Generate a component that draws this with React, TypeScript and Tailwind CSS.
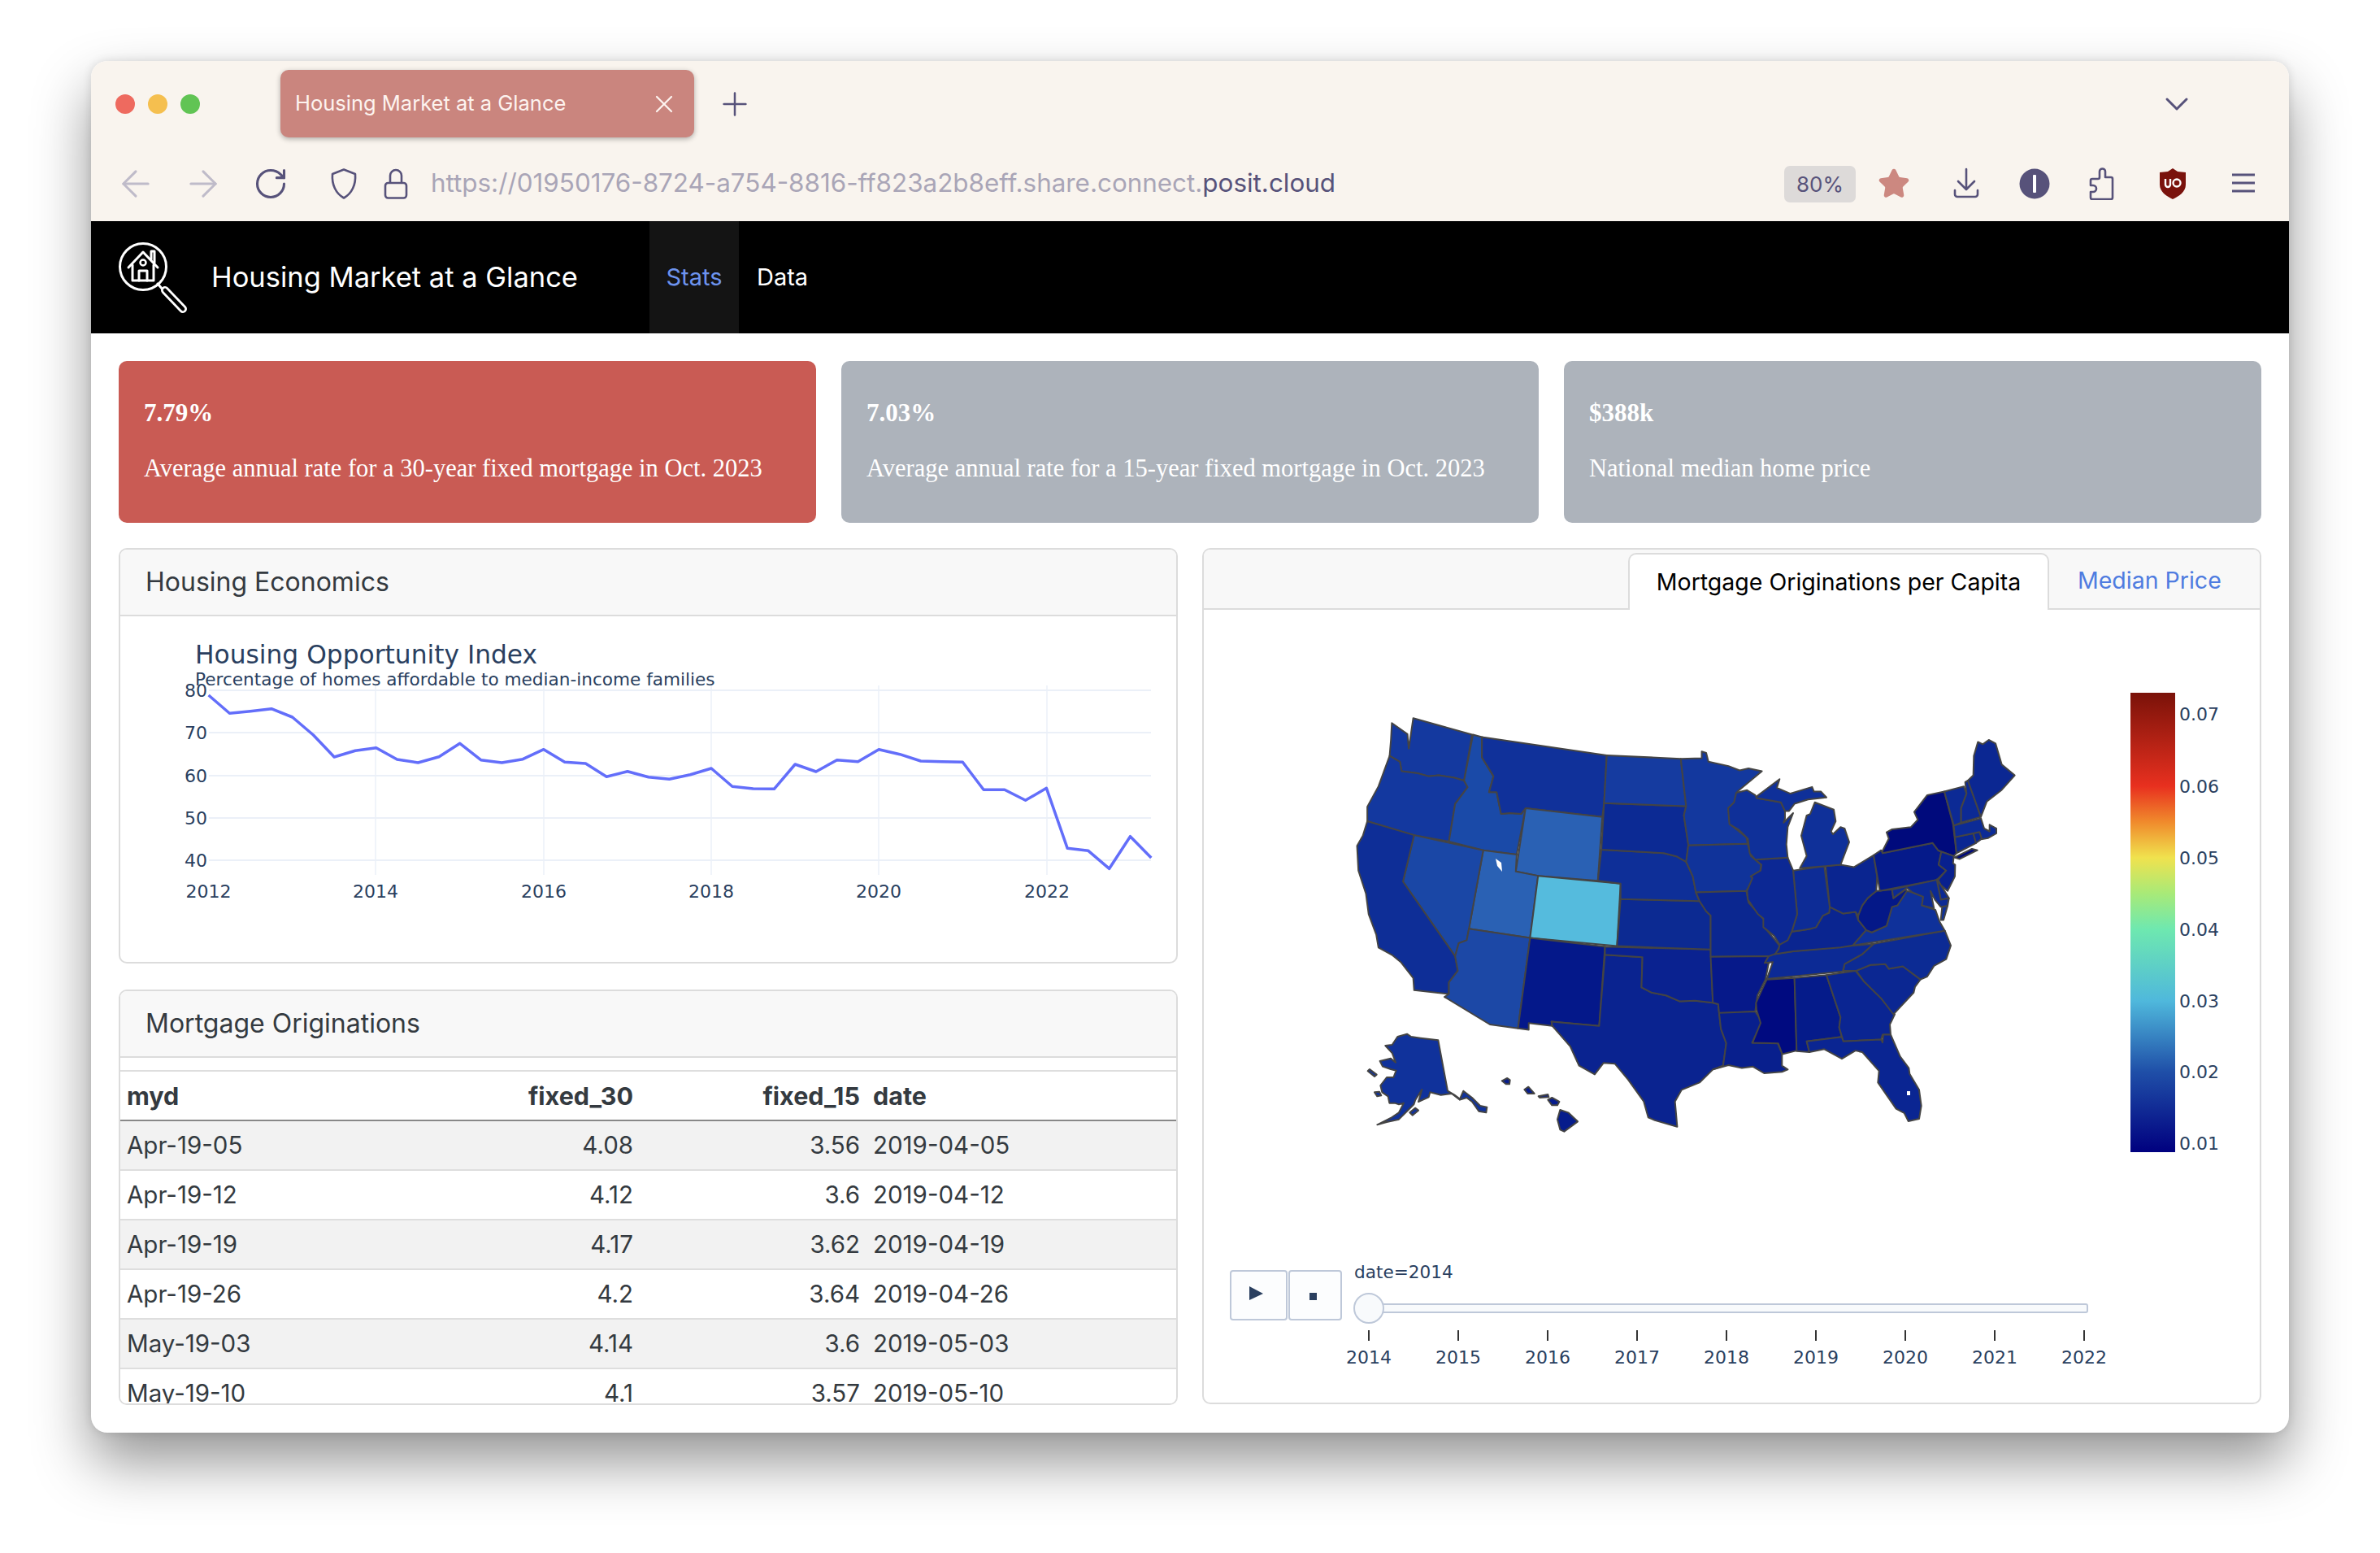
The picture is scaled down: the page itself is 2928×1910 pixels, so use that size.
import React from 'react';
import { ArrowLeft, ArrowRight, RotateCw, Plus, X, ChevronDown, Star } from 'lucide-react';

// quarterly values, as y positions read off the chart
const lineY = [285, 352, 344, 335, 366, 432, 513, 490, 479, 522, 534, 512, 463, 524, 534, 521, 485, 532, 537, 586, 566, 587, 595, 578, 555, 622, 630, 631, 540, 567, 524, 530, 485, 503, 528, 530, 532, 634, 634, 673, 628, 850, 859, 925, 806, 885];
const linePoints = lineY.map((y, i) => `${(256.6 + i * 25.77).toFixed(1)},${(760 + y / 3).toFixed(1)}`).join(' ');

const rows = [
  ['Apr-19-05', '4.08', '3.56', '2019-04-05'],
  ['Apr-19-12', '4.12', '3.6', '2019-04-12'],
  ['Apr-19-19', '4.17', '3.62', '2019-04-19'],
  ['Apr-19-26', '4.2', '3.64', '2019-04-26'],
  ['May-19-03', '4.14', '3.6', '2019-05-03'],
  ['May-19-10', '4.1', '3.57', '2019-05-10'],
];

const westStates: [string, string][] = [
  ['#14399f', '130,82 165,120 168,170 178,65 310,122 292,280 270,270 235,262 212,265 188,255 152,248 148,215 125,195 128,140'],
  ['#13389f', '125,195 148,215 152,248 188,255 212,265 235,262 270,270 292,280 300,303 272,360 258,490 180,468 75,420 75,370 100,300'],
  ['#1a4aa8', '312,122 332,130 332,200 358,265 348,320 365,320 375,395 395,392 420,395 430,375 410,535 335,520 258,490 272,360 300,303 292,280'],
  ['#10319a', '332,130 612,193 606,358 602,405 430,375 420,395 395,392 375,395 365,320 348,320 358,265 332,200'],
  ['#2a61b4', '430,375 602,405 592,625 458,608 408,593'],
  ['#2a61b4', '335,520 410,535 408,593 458,608 440,822 303,790'],
  ['#55bbdd', '458,608 643,635 635,850 440,822'],
  ['#1a47a6', '180,468 335,520 303,790 298,830 280,840 272,885 155,628'],
  ['#0e2e97', '75,420 180,468 155,628 272,885 278,935 258,975 258,1015 180,1002 178,960 150,905 130,880 100,855 95,810 78,740 72,670 55,590 52,505 65,470'],
  ['#1c48a6', '303,790 440,822 413,1133 350,1120 248,1025 258,1015 258,975 278,935 272,885 280,840 298,830'],
  ['#04188a', '440,822 608,852 595,1125 488,1110 490,1125 437,1115 437,1138 413,1133'],
  ['#0a2390', '608,880 692,888 690,992 712,1010 745,1020 775,1040 810,1038 850,1045 862,1050 864,1080 868,1135 880,1185 873,1262 850,1275 820,1320 780,1345 765,1385 770,1472 720,1450 705,1440 695,1385 660,1310 630,1255 605,1252 585,1292 550,1262 530,1195 490,1125 488,1110 595,1125'],
  ['#0a2290', '608,852 845,862 850,1045 810,1038 775,1040 745,1020 712,1010 690,992 692,888 608,880'],
  ['#0c2a92', '643,688 820,695 835,730 845,745 845,862 635,850'],
  ['#0e2f98', '600,518 740,530 770,542 790,560 805,610 812,665 820,695 643,688 643,635 592,625'],
  ['#0c2a94', '606,358 790,368 785,400 795,500 790,560 770,542 740,530 600,518'],
  ['#153ba0', '612,193 778,205 790,368 606,358'],
  ['#13389e', '778,205 825,203 825,180 835,185 840,215 885,230 910,245 930,238 960,248 905,318 900,360 885,380 888,430 925,475 928,498 795,503 785,400 790,368'],
  ['#10339a', '795,503 928,498 935,540 958,570 955,605 938,625 925,660 812,665 805,610 790,560'],
  ['#0b2790', '812,665 925,660 930,700 965,760 968,790 990,830 1000,850 990,880 975,910 968,905 975,885 845,887 845,745 835,730 820,695'],
  ['#06198a', '845,887 975,885 968,905 975,910 968,965 950,1020 945,1075 864,1082 862,1050 850,1045'],
  ['#081f8d', '864,1080 945,1075 960,1110 938,1183 995,1183 1005,1220 1005,1262 1018,1275 1005,1283 965,1288 940,1265 915,1270 885,1260 850,1275 873,1262 880,1185 868,1135'],
];

const eastStates: [string, string][] = [
  ['#000a80', '218,965 320,960 328,1210 275,1222 260,1185 165,1183 195,1115 180,1070 178,1045 205,990'],
  ['#051b8a', '320,960 438,950 490,1095 485,1130 495,1163 365,1178 375,1215 328,1212'],
  ['#0a2592', '438,950 545,935 575,970 640,1030 690,1085 672,1120 675,1155 645,1155 640,1172 500,1178 485,1130 490,1095'],
  ['#0a2592', '365,1178 495,1163 500,1178 640,1172 645,1182 648,1155 675,1155 710,1230 742,1270 745,1290 780,1345 788,1400 780,1445 740,1453 725,1425 695,1410 628,1320 632,1280 570,1215 545,1210 495,1238 430,1205 375,1215'],
  ['#0b2792', '548,935 600,915 655,912 668,928 720,920 785,965 765,990 760,1010 710,1060 685,1085 640,1030 575,970'],
  ['#0c2b94', '500,935 505,912 570,878 612,842 875,797 897,848 880,895 835,918 810,955 785,965 720,920 668,928 655,912 600,915 548,935'],
  ['#0c2a95', '245,878 315,868 612,842 570,878 505,912 498,937 218,963 240,905 210,908 225,885'],
  ['#0a2590', '265,845 310,800 350,795 380,790 400,785 425,745 448,735 450,715 500,738 545,732 555,760 585,795 535,848 490,855 315,868 248,878 262,860'],
  ['#0f319a', '535,848 585,795 605,803 660,780 680,715 700,710 735,660 755,665 795,680 790,710 840,725 855,765 875,797'],
  ['#041888', '555,745 570,710 590,685 615,665 625,660 680,655 685,685 730,655 735,660 700,710 680,715 660,780 605,803 585,795 555,760'],
  ['#0a2590', '435,575 490,570 540,578 612,537 625,610 622,660 590,685 570,710 555,745 545,732 500,738 450,715'],
  ['#0d2c96', '315,590 430,575 450,715 448,735 425,745 400,785 380,790 350,795 310,800 330,740'],
  ['#0c2894', '175,552 295,545 315,590 330,740 310,800 295,830 265,845 245,815 205,785 205,755 185,740 148,690 145,660 165,615 158,610 195,590 198,570'],
  ['#0f3099', '105,322 145,313 175,330 180,340 270,355 285,385 285,410 280,425 315,392 295,440 290,500 295,545 175,552 155,530 148,480 115,450 80,430 75,375 97,355'],
  ['#0f3099', '345,470 365,400 378,395 395,355 465,380 472,420 455,455 462,465 490,440 505,445 522,492 490,570 435,575 340,582 365,540'],
  ['#0f3099', '180,335 265,275 255,305 305,325 385,302 392,318 418,318 438,338 370,345 320,360 300,385 285,385 270,355 180,340'],
  ['#051a8a', '612,537 640,520 645,530 830,495 850,520 862,525 852,570 880,590 845,622 635,660'],
  ['#000a7c', '645,522 668,480 660,458 680,448 750,440 775,415 762,388 810,330 873,318 905,430 918,530 908,540 862,525 850,520 830,495 645,530'],
  ['#000a7c', '910,545 975,515 995,520 930,550'],
  ['#08208e', '862,525 908,540 905,565 913,570 912,610 885,660 860,640 850,622 880,590 852,570'],
  ['#0c2a94', '845,620 860,640 890,685 860,690'],
  ['#0c2a94', '680,655 845,622 860,690 890,685 885,712 860,715 838,690 822,660 835,720 790,710 795,680 755,665 735,650 685,685'],
  ['#0f319a', '865,715 885,712 870,760 860,760'],
  ['#0a2792', '912,475 980,462 990,495 918,530'],
  ['#0a2792', '980,462 1003,457 1012,480 990,495'],
  ['#0c2b96', '908,435 1008,410 1020,445 1040,455 1040,432 1065,445 1065,462 1035,478 1012,482 1003,457 912,475'],
  ['#0c2a95', '873,318 945,300 955,325 935,375 935,425 908,435'],
  ['#0c2a95', '950,285 960,280 1008,405 935,425 935,375 955,325'],
  ['#0b2792', '960,280 980,262 982,195 997,147 1015,155 1037,140 1062,152 1085,225 1133,262 1085,312 1030,352 1008,405'],
];

const insetStates: [string, string][] = [
  ['#10329b', '270,815 285,825 320,830 385,838 420,1025 445,1040 465,1055 478,1025 510,1050 540,1080 565,1085 562,1105 535,1100 510,1065 490,1050 465,1058 435,1035 395,1040 355,1030 350,1048 312,1065 325,1020 300,1060 295,1075 265,1105 240,1130 195,1140 160,1150 210,1125 240,1105 258,1070 240,1075 225,1070 205,1070 200,1045 178,1030 172,1005 195,975 220,975 230,950 210,945 180,935 170,915 210,905 228,920 215,885 190,858 215,855 235,825'],
  ['#10329b', '280,1105 300,1088 312,1097 290,1115'],
  ['#10329b', '125,952 132,945 158,965 150,972'],
  ['#10329b', '150,1030 168,1028 175,1042 160,1045'],
  ['#061c8c', '620,988 640,978 650,985 648,1000 635,1000'],
  ['#061c8c', '703,1020 718,1010 740,1035 715,1035'],
  ['#061c8c', '755,1045 790,1038 793,1048 760,1050'],
  ['#061c8c', '790,1058 805,1050 832,1065 825,1078 805,1078'],
  ['#061c8c', '835,1095 865,1105 900,1138 850,1175 835,1168 825,1130'],
];

const colorTicks: [string, number][] = [['0.07', 878], ['0.06', 967], ['0.05', 1055], ['0.04', 1143], ['0.03', 1231], ['0.02', 1318], ['0.01', 1406]];
const years = [2014, 2015, 2016, 2017, 2018, 2019, 2020, 2021, 2022];

function States({ list, transform }: { list: [string, string][]; transform: string }) {
  return (
    <g transform={transform}>
      {list.map(([fill, points], i) => (
        <polygon key={i} points={points} fill={fill} stroke="#444" strokeWidth={2} strokeLinejoin="round" vectorEffect="non-scaling-stroke" />
      ))}
    </g>
  );
}

function Logo() {
  return (
    <svg width="88" height="88" viewBox="0 0 88 88" fill="none" stroke="white" strokeWidth="3" strokeLinejoin="round" strokeLinecap="round">
      <circle cx="31" cy="31" r="28.5" />
      <path d="M13 32 31 13 49 32" />
      <path d="M41 22V12h4v14" />
      <path d="M18 29v19h26V29" />
      <path d="M26 48V36h10v12" />
      <circle cx="31" cy="26" r="3.5" strokeWidth="2.5" />
      <path d="M49 52 56 60" />
      <path d="M58 60 80 83" strokeWidth="10" />
      <path d="M58 60 80 83" stroke="black" strokeWidth="4.5" />
    </svg>
  );
}

function LineChart() {
  return (
    <svg viewBox="148 758 1298 425" width="1298" height="425" className="block">
      {[462, 669, 875, 1081, 1288].map((x) => (
        <line key={x} x1={x} x2={x} y1={843} y2={1076} stroke="#ebf0f8" strokeWidth={1.5} />
      ))}
      {[849, 901, 954, 1006, 1058].map((y) => (
        <line key={y} x1={257} x2={1416} y1={y} y2={y} stroke="#ebf0f8" strokeWidth={2} />
      ))}
      <polyline points={linePoints} fill="none" stroke="#636efa" strokeWidth={3.5} strokeLinejoin="round" />
      <g className="font-['DejaVu_Sans',sans-serif] fill-[#2a3f5f]">
        <text x={240} y={816} className="text-[31.3px]">Housing Opportunity Index</text>
        <text x={240} y={843} className="text-[21.6px]">Percentage of homes affordable to median-income families</text>
        {[['80', 857], ['70', 909], ['60', 962], ['50', 1014], ['40', 1066]].map(([label, y]) => (
          <text key={label} x={255} y={y} textAnchor="end" className="text-[22px]">{label}</text>
        ))}
        {[['2012', 256.6], ['2014', 462], ['2016', 669], ['2018', 875], ['2020', 1081], ['2022', 1288]].map(([label, x]) => (
          <text key={label} x={x} y={1104} textAnchor="middle" className="text-[22px]">{label}</text>
        ))}
      </g>
    </svg>
  );
}

function MapFigure() {
  return (
    <svg viewBox="1480 750 1300 975" width="1300" height="975" className="block">
      <defs>
        <linearGradient id="colorbar" x1="0" y1="0" x2="0" y2="1">
          <stop offset="0" stopColor="#7a1209" />
          <stop offset="0.2035" stopColor="#e8301f" />
          <stop offset="0.281" stopColor="#f08a2c" />
          <stop offset="0.359" stopColor="#f0e24e" />
          <stop offset="0.437" stopColor="#a8ea78" />
          <stop offset="0.515" stopColor="#6ee8b0" />
          <stop offset="0.671" stopColor="#4fb8dc" />
          <stop offset="0.825" stopColor="#1f4fa8" />
          <stop offset="1" stopColor="#00007f" />
        </linearGradient>
      </defs>

      <States list={westStates} transform="translate(1640 860) scale(0.54855 0.35714)" />
      <States list={eastStates} transform="translate(2100 860) scale(0.33333 0.35714)" />
      <States list={insetStates} transform="translate(1640 1000) scale(0.33333)" />
      {/* Great Salt Lake and Lake Okeechobee */}
      <polygon points="1839,1056 1846,1061 1847,1072 1841,1065" fill="white" />
      <rect x="2345" y="1342" width="4" height="5" fill="white" />

      <rect x="2620" y="852" width="55" height="565" fill="url(#colorbar)" />
      <g className="font-['DejaVu_Sans',sans-serif] fill-[#2a3f5f]">
        {colorTicks.map(([label, y]) => (
          <text key={label} x={2680} y={y + 8} className="text-[22px]">{label}</text>
        ))}
        <text x={1665} y={1572} className="text-[21.6px]">date=2014</text>
        {years.map((year, i) => (
          <text key={year} x={1683 + i * 110} y={1677} textAnchor="middle" className="text-[22px]">{year}</text>
        ))}
      </g>

      {/* animation buttons and slider */}
      <rect x="1513" y="1563" width="69" height="60" rx="3" fill="#fcfdfe" stroke="#bec8d9" strokeWidth="2" />
      <rect x="1585" y="1563" width="64" height="60" rx="3" fill="#fcfdfe" stroke="#bec8d9" strokeWidth="2" />
      <polygon points="1536,1582 1553,1591 1536,1599" fill="#2a3f5f" />
      <rect x="1610" y="1590" width="9" height="9" fill="#2a3f5f" />
      <rect x="1683" y="1604" width="884" height="10" rx="2" fill="#f8fafc" stroke="#bec8d9" strokeWidth="2" />
      <circle cx="1683" cy="1609" r="18" fill="#f8fafc" stroke="#bec8d9" strokeWidth="2" />
      {years.map((year, i) => (
        <line key={year} x1={1683 + i * 110} x2={1683 + i * 110} y1={1636} y2={1649} stroke="#333" strokeWidth={2} />
      ))}
    </svg>
  );
}

function Panel({ title, className, children }: { title: string; className: string; children: React.ReactNode }) {
  return (
    <div className={`border-2 border-[#dcdcdc] rounded-[10px] overflow-hidden bg-white ${className}`}>
      <div className="h-[82px] bg-[#f8f8f8] border-b-2 border-[#dcdcdc] flex items-center px-[31px] text-[32px] text-[#343a40]">{title}</div>
      {children}
    </div>
  );
}

function StatCard({ value, text, color }: { value: string; text: string; color: string }) {
  return (
    <div className={`h-[199px] w-[858px] rounded-[10px] ${color} text-white px-[31px] pt-[46px] font-['Liberation_Serif',serif]`}>
      <div className="text-[31px] leading-[36px] font-bold">{value}</div>
      <div className="text-[30.5px] leading-[36px] mt-[32px]">{text}</div>
    </div>
  );
}

export default function App() {
  return (
    <div className="w-[2928px] h-[1910px] bg-white pt-[75px] pl-[112px] font-['Inter',sans-serif] overflow-hidden">
      <div className="w-[2704px] h-[1687px] rounded-[20px] overflow-hidden bg-white shadow-[0_36px_70px_rgba(0,0,0,0.42),0_0_12px_rgba(0,0,0,0.12)]">
        {/* browser chrome */}
        <div className="bg-[#f9f4ee] h-[197px] text-[#57527a]">
          <div className="h-[105px] flex items-center pl-[30px]">
            <div className="w-[24px] h-[24px] rounded-full bg-[#ee6a5f]" />
            <div className="w-[24px] h-[24px] rounded-full bg-[#f5bf4f] ml-[16px]" />
            <div className="w-[24px] h-[24px] rounded-full bg-[#61c454] ml-[16px]" />
            <div className="ml-[99px] w-[509px] h-[83px] rounded-[10px] bg-[#ca857e] shadow-[0_2px_6px_rgba(0,0,0,0.3)] flex items-center pl-[18px] pr-[19px] text-[#fdf3ef] text-[25.5px]">
              <span className="flex-1">Housing Market at a Glance</span>
              <X size={36} strokeWidth={1.5} />
            </div>
            <Plus size={46} strokeWidth={1.3} className="ml-[27px]" />
            <ChevronDown size={48} strokeWidth={1.5} className="ml-auto mr-[114px]" />
          </div>
          <div className="h-[92px] flex items-center pr-[38px]">
            <ArrowLeft size={52} strokeWidth={1.4} className="ml-[29px] text-[#bfbbc9]" />
            <ArrowRight size={52} strokeWidth={1.4} className="ml-[31px] text-[#bfbbc9]" />
            <RotateCw size={44} strokeWidth={1.7} className="ml-[35px]" />
            <svg width="34" height="38" viewBox="0 0 34 38" fill="none" stroke="currentColor" strokeWidth="2.6" strokeLinejoin="round" className="ml-[51px]">
              <path d="M17 1.5 31 7C32 20 27 31 17 36.5 7 31 2 20 3 7Z" />
            </svg>
            <svg width="30" height="38" viewBox="0 0 30 38" fill="none" stroke="currentColor" strokeWidth="2.6" className="ml-[32px]">
              <rect x="2" y="18" width="26" height="18.5" rx="3.5" />
              <path d="M8 18V9a7 7 0 0 1 14 0v9" />
            </svg>
            <div className="ml-[28px] flex-1 text-[31.4px] text-[#a9a5b7]">
              https://01950176-8724-a754-8816-ff823a2b8eff.share.connect.<span className="text-[#57527a]">posit.cloud</span>
            </div>
            <div className="w-[88px] h-[45px] rounded-[7px] bg-[#dddad9] flex items-center justify-center text-[26px]">80%</div>
            <Star size={40} className="ml-[27px] text-[#cc8880] fill-[#cc8880]" />
            <svg width="40" height="40" viewBox="0 0 40 40" fill="none" stroke="currentColor" strokeWidth="2.6" strokeLinecap="round" strokeLinejoin="round" className="ml-[49px]">
              <path d="M20 2v24M10 17l10 10 10-10M6 28v5a3 3 0 0 0 3 3h22a3 3 0 0 0 3-3v-5" />
            </svg>
            <svg width="38" height="38" viewBox="0 0 38 38" className="ml-[45px]">
              <circle cx="19" cy="19" r="18.5" fill="currentColor" />
              <rect x="17" y="8" width="4" height="22" rx="1" fill="white" />
            </svg>
            <svg width="40" height="40" viewBox="0 0 40 40" fill="none" stroke="currentColor" strokeWidth="2.6" strokeLinejoin="round" className="ml-[40px]">
              <path d="M21 10V5a3.5 3.5 0 0 1 7 0v7h7a2 2 0 0 1 2 2v23a2 2 0 0 1-2 2H12a2 2 0 0 1-2-2v-7h3a4 4 0 0 0 0-8h-3v-6a2 2 0 0 1 2-2h7a2 2 0 0 0 2-2Z" />
            </svg>
            <svg width="38" height="38" viewBox="0 0 38 38" className="ml-[52px]">
              <path d="M19 0 25 4 35 5V20C35 29 27 34 19 38 11 34 3 29 3 20V5L13 4Z" fill="#7a120c" />
              <path d="M10 13v7a3 3 0 0 0 6 0v-7" fill="none" stroke="white" strokeWidth="2.4" />
              <circle cx="24" cy="18" r="4.5" fill="none" stroke="white" strokeWidth="2.4" />
            </svg>
            <svg width="36" height="24" viewBox="0 0 36 24" fill="none" stroke="currentColor" strokeWidth="3" className="ml-[50px] -mt-[2px]">
              <path d="M4 2h28M4 12h28M4 22h28" />
            </svg>
          </div>
        </div>

        {/* app navbar */}
        <div className="bg-black h-[138px] flex items-center text-white">
          <div className="ml-[33px]">
            <Logo />
          </div>
          <div className="ml-[27px] w-[539px] text-[34.5px]">Housing Market at a Glance</div>
          <div className="h-full w-[110px] bg-[#141414] flex items-center justify-center text-[29px] text-[#6d93ee]">Stats</div>
          <div className="ml-[22px] text-[29px]">Data</div>
        </div>

        {/* dashboard */}
        <div className="px-[34px] pt-[34px]">
          <div className="flex gap-[31px]">
            <StatCard value="7.79%" text="Average annual rate for a 30-year fixed mortgage in Oct. 2023" color="bg-[#c95b54]" />
            <StatCard value="7.03%" text="Average annual rate for a 15-year fixed mortgage in Oct. 2023" color="bg-[#adb3bb]" />
            <StatCard value="$388k" text="National median home price" color="bg-[#adb3bb]" />
          </div>

          <div className="mt-[31px] flex gap-[30px]">
            <div className="w-[1303px]">
              <Panel title="Housing Economics" className="h-[511px]">
                <LineChart />
              </Panel>
              <Panel title="Mortgage Originations" className="h-[511px] mt-[32px]">
                <div className="mt-[15px] border-t-2 border-[#dedede]">
                  <table className="w-full table-fixed border-collapse text-[29.5px] text-[#343a40]">
                    <thead>
                      <tr className="h-[60px] text-[30.5px] border-b-2 border-[#888]">
                        <th className="w-[350px] px-[8px] text-left font-bold">myd</th>
                        <th className="w-[289px] px-[8px] text-right font-bold">fixed_30</th>
                        <th className="w-[279px] px-[8px] text-right font-bold">fixed_15</th>
                        <th className="px-[8px] text-left font-bold">date</th>
                      </tr>
                    </thead>
                    <tbody>
                      {rows.map((r, i) => (
                        <tr key={r[0]} className={`h-[61px] border-b-2 border-[#dedede] ${i % 2 === 0 ? 'bg-[#f2f2f2]' : 'bg-white'}`}>
                          <td className="px-[8px] text-left">{r[0]}</td>
                          <td className="px-[8px] text-right">{r[1]}</td>
                          <td className="px-[8px] text-right">{r[2]}</td>
                          <td className="px-[8px] text-left">{r[3]}</td>
                        </tr>
                      ))}
                    </tbody>
                  </table>
                </div>
              </Panel>
            </div>

            <div className="w-[1303px] h-[1053px] border-2 border-[#dcdcdc] rounded-[10px] overflow-hidden">
              <div className="h-[74px] bg-[#f8f8f8] border-b-2 border-[#dcdcdc] flex items-end text-[28.5px]">
                <div className="ml-[522px] w-[518px] h-[70px] -mb-[2px] bg-white border-2 border-b-0 border-[#dcdcdc] rounded-t-[10px] flex items-center justify-center text-black">
                  Mortgage Originations per Capita
                </div>
                <div className="ml-[35px] h-[68px] flex items-center text-[#4f7ce0]">Median Price</div>
              </div>
              <MapFigure />
            </div>
          </div>
        </div>
      </div>
    </div>
  );
}
